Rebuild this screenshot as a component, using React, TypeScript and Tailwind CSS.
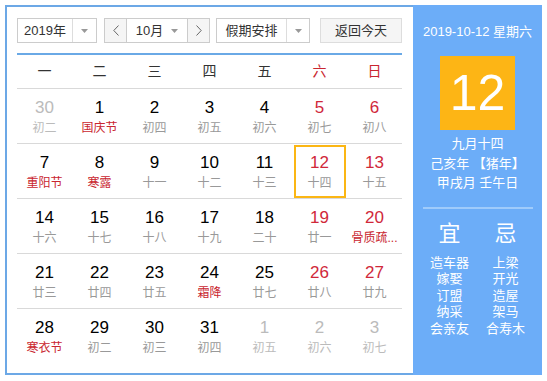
import React from "react";

type Day = {
  n: number;
  lunar: string;
  other?: boolean;
  redNum?: boolean;
  redLunar?: boolean;
  selected?: boolean;
};

const rows: Day[][] = [
  [
    { n: 30, lunar: "初二", other: true },
    { n: 1, lunar: "国庆节", redLunar: true },
    { n: 2, lunar: "初四" },
    { n: 3, lunar: "初五" },
    { n: 4, lunar: "初六" },
    { n: 5, lunar: "初七", redNum: true },
    { n: 6, lunar: "初八", redNum: true },
  ],
  [
    { n: 7, lunar: "重阳节", redLunar: true },
    { n: 8, lunar: "寒露", redLunar: true },
    { n: 9, lunar: "十一" },
    { n: 10, lunar: "十二" },
    { n: 11, lunar: "十三" },
    { n: 12, lunar: "十四", redNum: true, selected: true },
    { n: 13, lunar: "十五", redNum: true },
  ],
  [
    { n: 14, lunar: "十六" },
    { n: 15, lunar: "十七" },
    { n: 16, lunar: "十八" },
    { n: 17, lunar: "十九" },
    { n: 18, lunar: "二十" },
    { n: 19, lunar: "廿一", redNum: true },
    { n: 20, lunar: "骨质疏...", redNum: true, redLunar: true },
  ],
  [
    { n: 21, lunar: "廿三" },
    { n: 22, lunar: "廿四" },
    { n: 23, lunar: "廿五" },
    { n: 24, lunar: "霜降", redLunar: true },
    { n: 25, lunar: "廿七" },
    { n: 26, lunar: "廿八", redNum: true },
    { n: 27, lunar: "廿九", redNum: true },
  ],
  [
    { n: 28, lunar: "寒衣节", redLunar: true },
    { n: 29, lunar: "初二" },
    { n: 30, lunar: "初三" },
    { n: 31, lunar: "初四" },
    { n: 1, lunar: "初五", other: true },
    { n: 2, lunar: "初六", other: true },
    { n: 3, lunar: "初七", other: true },
  ],
];

const weekdays = ["一", "二", "三", "四", "五", "六", "日"];

const yi = ["造车器", "嫁娶", "订盟", "纳采", "会亲友"];
const ji = ["上梁", "开光", "造屋", "架马", "合寿木"];

function Caret() {
  return (
    <svg width="7" height="4" viewBox="0 0 7 4">
      <path d="M0 0 L7 0 L3.5 4 Z" fill="#999" />
    </svg>
  );
}

function Chevron({ dir }: { dir: "left" | "right" }) {
  return (
    <svg width="6" height="11" viewBox="0 0 6 11">
      <polyline
        points={dir === "left" ? "5.5,0.5 0.8,5.5 5.5,10.5" : "0.5,0.5 5.2,5.5 0.5,10.5"}
        fill="none"
        stroke="#666"
        strokeWidth="1"
      />
    </svg>
  );
}

function DayCell({ d }: { d: Day }) {
  const numColor = d.other ? "text-[#bbb]" : d.redNum ? "text-[#d0283a]" : "text-black";
  const lunarColor = d.other ? "text-[#bbb]" : d.redLunar ? "text-[#c9262f]" : "text-[#999]";
  return (
    <div className="flex h-[55px] justify-center border-b border-[#d9d9d9] pt-[1px]">
      <div
        className={
          "flex h-[53px] w-[52px] flex-col items-center border-2 pt-[6px] " +
          (d.selected ? "border-[#fbb614]" : "border-transparent")
        }
      >
        <span className={"text-[17px] leading-[20px] " + numColor}>{d.n}</span>
        <span className={"mt-[2px] whitespace-nowrap text-[12px] leading-[16px] " + lunarColor}>{d.lunar}</span>
      </div>
    </div>
  );
}

export default function App() {
  return (
    <div className="h-[381px] w-[547px] bg-white p-[5px] font-['Liberation_Sans','Noto_Sans_CJK_SC',sans-serif] text-[#333]">
      <div className="flex h-[370px]">
        {/* left: calendar */}
        <div className="w-[408px] border-y-2 border-l-2 border-[#6ca8e6] pl-[10px] pr-[11px] pt-[11px]">
          <div className="flex h-[25px] items-stretch text-[13px]">
            <div className="flex w-[80px] border border-[#ccc] bg-white">
              <span className="flex flex-1 items-center justify-center">2019年</span>
              <span className="flex w-[24px] items-center justify-center border-l border-[#ddd]">
                <Caret />
              </span>
            </div>
            <div className="ml-[7px] flex w-[106px] border border-[#ccc]">
              <span className="flex w-[22px] items-center justify-center border-r border-[#ccc] bg-[#f5f5f5]">
                <Chevron dir="left" />
              </span>
              <span className="flex flex-1 items-center justify-center gap-[8px] bg-white">
                10月
                <Caret />
              </span>
              <span className="flex w-[22px] items-center justify-center border-l border-[#ccc] bg-[#f5f5f5]">
                <Chevron dir="right" />
              </span>
            </div>
            <div className="ml-[6px] flex w-[94px] border border-[#ccc] bg-white">
              <span className="flex flex-1 items-center justify-center">假期安排</span>
              <span className="flex w-[23px] items-center justify-center border-l border-[#ddd]">
                <Caret />
              </span>
            </div>
            <div className="ml-[10px] flex w-[82px] items-center justify-center border border-[#ddd] bg-[#f5f5f5]">
              返回今天
            </div>
          </div>

          <div className="mt-[10px] h-[2px] bg-[#6aa9e6]" />

          <div className="grid h-[34px] grid-cols-7 items-center border-b border-[#d9d9d9] text-[14px]">
            {weekdays.map((w, i) => (
              <span key={w} className={"text-center " + (i >= 5 ? "text-[#c9262f]" : "text-[#333]")}>
                {w}
              </span>
            ))}
          </div>

          {rows.map((row, ri) => (
            <div key={ri} className={"grid grid-cols-7 " + (ri === rows.length - 1 ? "[&>div]:border-b-0" : "")}>
              {row.map((d, ci) => (
                <DayCell key={ci} d={d} />
              ))}
            </div>
          ))}
        </div>

        {/* right: today panel */}
        <div className="flex w-[130px] flex-col items-center bg-[#6cadf8] text-white">
          <div className="mt-[19px] text-[13px] leading-[16px]">2019-10-12 星期六</div>
          <div className="mt-[16px] flex h-[74px] w-[75px] items-center justify-center bg-[#fdb515] text-[50px] leading-none">
            12
          </div>
          <div className="mt-[4px] text-center text-[13px] leading-[19.5px]">
            <div>九月十四</div>
            <div>己亥年 【猪年】</div>
            <div>甲戌月 壬午日</div>
          </div>
          <div className="mt-[14px] h-[2px] w-[110px] bg-[#9fcbfb]" />
          <div className="mt-[11px] grid w-full grid-cols-2 px-[8.5px] text-center">
            <div className="text-[22px] leading-[28px]">宜</div>
            <div className="text-[22px] leading-[28px]">忌</div>
            <div className="mt-[7px] text-[13px] leading-[16.5px]">
              {yi.map((t) => (
                <div key={t}>{t}</div>
              ))}
            </div>
            <div className="mt-[7px] text-[13px] leading-[16.5px]">
              {ji.map((t) => (
                <div key={t}>{t}</div>
              ))}
            </div>
          </div>
        </div>
      </div>
    </div>
  );
}
